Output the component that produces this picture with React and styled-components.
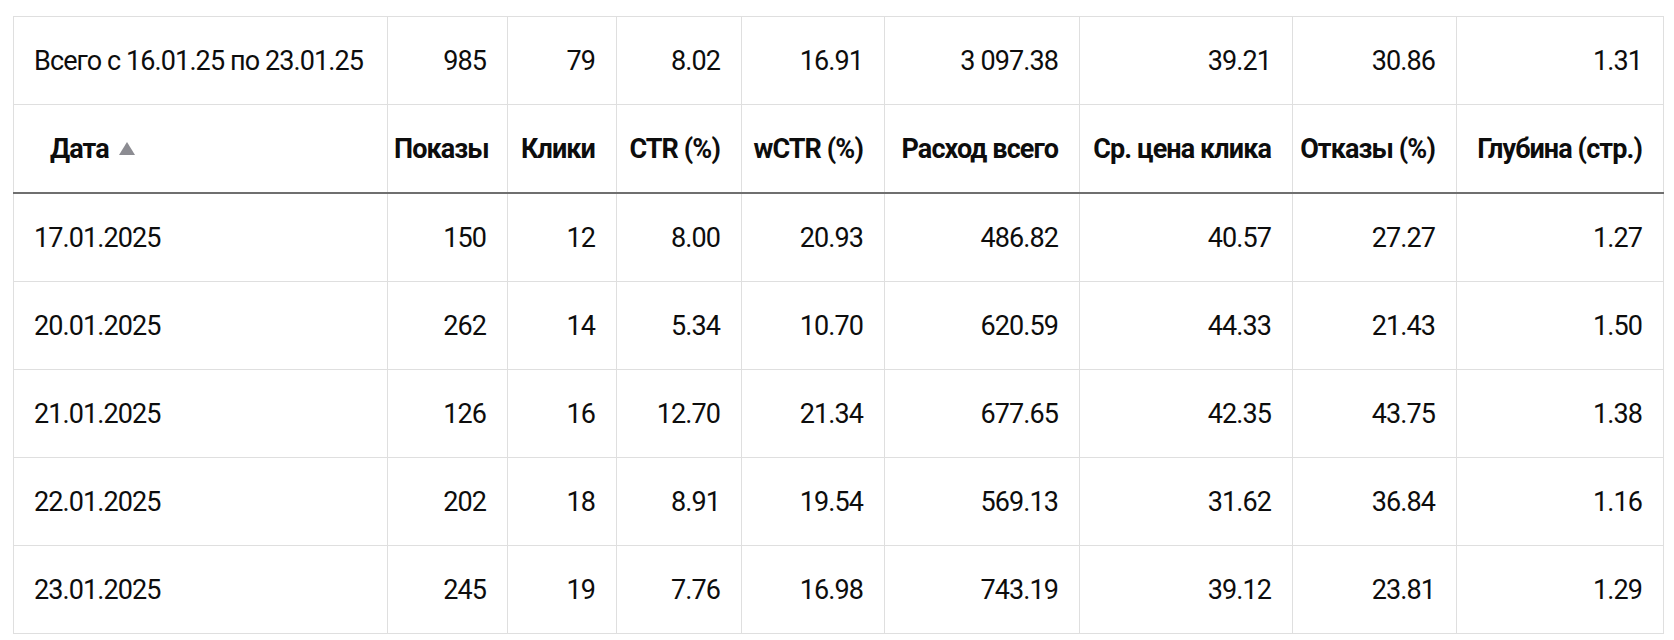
import React from 'react';
import styled, { createGlobalStyle } from 'styled-components';

const GlobalStyle = createGlobalStyle`
  body {
    margin: 0;
    background: #fff;
    font-family: Roboto, "Noto Sans", Arial, sans-serif;
    color: #0d0d0d;
  }
`;

const Page = styled.div`
  padding: 16px 11px 0 13px;
`;

const Table = styled.table`
  width: 1650px;
  table-layout: fixed;
  border-collapse: collapse;
  border: 1px solid #dfdfdf;
  font-size: 27px;
  letter-spacing: -0.9px;
`;

const Cell = styled.td`
  height: 87px;
  padding: 0 21px 0 20px;
  border: 1px solid #dfdfdf;
  text-align: ${({ left }) => (left ? 'left' : 'right')};
  vertical-align: middle;
  white-space: nowrap;
`;

const HeadRow = styled.tr`
  border-bottom: 2px solid #6f6f6f;
`;

const HeadCell = styled.th`
  height: 87px;
  padding: ${({ left }) => (left ? '0 0 0 36px' : '0 21px 0 6px')};
  border-left: 1px solid #dfdfdf;
  border-right: 1px solid #dfdfdf;
  border-bottom: 2px solid #6f6f6f;
  text-align: ${({ left }) => (left ? 'left' : 'right')};
  font-weight: 700;
  white-space: nowrap;
`;

const SortArrow = styled.span`
  display: inline-block;
  margin-left: 10px;
  width: 0;
  height: 0;
  border-left: 8px solid transparent;
  border-right: 8px solid transparent;
  border-bottom: 13px solid #8c8c92;
  vertical-align: 3px;
`;

const widths = [374, 120, 109, 125, 143, 195, 213, 164, 207];

const columns = [
  'Показы',
  'Клики',
  'CTR (%)',
  'wCTR (%)',
  'Расход всего',
  'Ср. цена клика',
  'Отказы (%)',
  'Глубина (стр.)',
];

const total = ['985', '79', '8.02', '16.91', '3 097.38', '39.21', '30.86', '1.31'];

const rows = [
  ['17.01.2025', '150', '12', '8.00', '20.93', '486.82', '40.57', '27.27', '1.27'],
  ['20.01.2025', '262', '14', '5.34', '10.70', '620.59', '44.33', '21.43', '1.50'],
  ['21.01.2025', '126', '16', '12.70', '21.34', '677.65', '42.35', '43.75', '1.38'],
  ['22.01.2025', '202', '18', '8.91', '19.54', '569.13', '31.62', '36.84', '1.16'],
  ['23.01.2025', '245', '19', '7.76', '16.98', '743.19', '39.12', '23.81', '1.29'],
];

const App = () => (
  <Page>
    <GlobalStyle />
    <Table>
      <colgroup>
        {widths.map((w, i) => (
          <col key={i} style={{ width: w }} />
        ))}
      </colgroup>
      <tbody>
        <tr>
          <Cell left>Всего с 16.01.25 по 23.01.25</Cell>
          {total.map((v, i) => (
            <Cell key={i}>{v}</Cell>
          ))}
        </tr>
        <HeadRow>
          <HeadCell left>
            Дата
            <SortArrow />
          </HeadCell>
          {columns.map((c) => (
            <HeadCell key={c}>{c}</HeadCell>
          ))}
        </HeadRow>
        {rows.map((r) => (
          <tr key={r[0]}>
            {r.map((v, i) => (
              <Cell key={i} left={i === 0}>
                {v}
              </Cell>
            ))}
          </tr>
        ))}
      </tbody>
    </Table>
  </Page>
);

export default App;
